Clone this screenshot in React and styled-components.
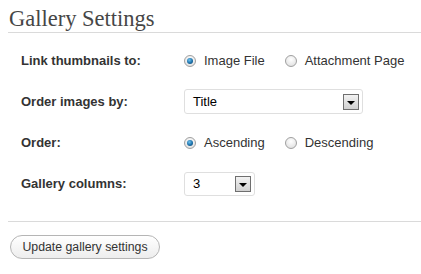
import React from "react";
import styled, { createGlobalStyle } from "styled-components";

const Global = createGlobalStyle`
  html, body { margin: 0; padding: 0; background: #fff; }
  body { font-family: "Liberation Sans", Arial, sans-serif; color: #333; }
`;

const Page = styled.div`
  padding: 0 0 0 8px;
  width: 413px;
`;

const Heading = styled.h2`
  margin: 0;
  padding: 6px 0 0 1px;
  font-family: "Liberation Serif", Georgia, serif;
  font-weight: normal;
  font-size: 22.5px;
  line-height: 26px;
  color: #464646;
  border-bottom: 1px solid #dadada;
`;

const Form = styled.div`
  margin-top: 7px;
  display: flex;
  flex-direction: column;
`;

const Row = styled.div`
  display: grid;
  grid-template-columns: 176px 1fr;
  align-items: center;
  height: 41px;
`;

const Label = styled.div`
  padding-left: 13px;
  font-size: 13px;
  font-weight: bold;
  color: #333;
`;

const Options = styled.div`
  display: flex;
  align-items: center;
  gap: 20px;
`;

const Option = styled.label`
  display: flex;
  align-items: center;
  gap: 8px;
  font-size: 13px;
  color: #333;
`;

const Radio = styled.span`
  box-sizing: border-box;
  width: 12px;
  height: 12px;
  border-radius: 50%;
  border: 1px solid #a0a0a0;
  background: radial-gradient(circle at 50% 35%, #fff 0%, #e6e6e6 70%, #d2d2d2 100%);
  display: flex;
  align-items: center;
  justify-content: center;
  &::after {
    content: "";
    display: ${(p) => (p.$checked ? "block" : "none")};
    width: 6px;
    height: 6px;
    border-radius: 50%;
    background: radial-gradient(circle at 40% 35%, #6fc3f0 0%, #1b6fa8 55%, #0d3f66 100%);
  }
`;

const Select = styled.div`
  box-sizing: border-box;
  width: ${(p) => p.$width}px;
  height: ${(p) => p.$height}px;
  border: 1px solid #dfdfdf;
  border-radius: 3px;
  background: #fff;
  display: flex;
  align-items: center;
  justify-content: space-between;
  padding: 0 3px 0 8px;
  font-size: 13px;
  color: #000;
`;

const Arrow = styled.span`
  box-sizing: border-box;
  width: 16px;
  height: 16px;
  border: 1px solid #6f6f6f;
  background: linear-gradient(#f2f2f2, #d0d0d0);
  display: flex;
  align-items: center;
  justify-content: center;
  &::after {
    content: "";
    width: 0;
    height: 0;
    border-left: 4px solid transparent;
    border-right: 4px solid transparent;
    border-top: 4px solid #000;
    margin-top: 2px;
  }
`;

const Divider = styled.div`
  margin-top: 17px;
  border-top: 1px solid #dadada;
`;

const Button = styled.button`
  margin: 13px 0 0 2px;
  box-sizing: border-box;
  width: 150px;
  height: 24px;
  border: 1px solid #b5b5b5;
  border-radius: 12px;
  background: linear-gradient(#ffffff, #ededed);
  font-family: "Liberation Sans", Arial, sans-serif;
  font-size: 12.3px;
  color: #333;
  padding: 0;
  display: block;
`;

export default function App() {
  return (
    <>
      <Global />
      <Page>
        <Heading>Gallery Settings</Heading>
        <Form>
          <Row>
            <Label>Link thumbnails to:</Label>
            <Options>
              <Option><Radio $checked />Image File</Option>
              <Option><Radio />Attachment Page</Option>
            </Options>
          </Row>
          <Row>
            <Label>Order images by:</Label>
            <Select $width={179} $height={25}>Title<Arrow /></Select>
          </Row>
          <Row>
            <Label>Order:</Label>
            <Options>
              <Option><Radio $checked />Ascending</Option>
              <Option><Radio />Descending</Option>
            </Options>
          </Row>
          <Row>
            <Label>Gallery columns:</Label>
            <Select $width={71} $height={24}>3<Arrow /></Select>
          </Row>
        </Form>
        <Divider />
        <Button>Update gallery settings</Button>
      </Page>
    </>
  );
}
